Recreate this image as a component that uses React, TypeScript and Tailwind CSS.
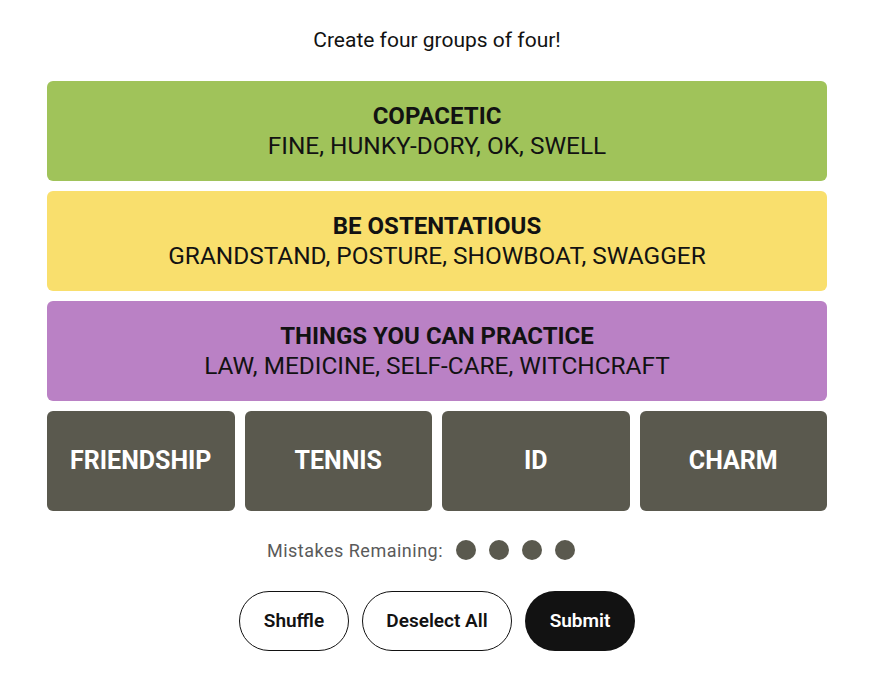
import React from "react";

const groups = [
  { title: "COPACETIC", words: "FINE, HUNKY-DORY, OK, SWELL", bg: "bg-[#a0c35a]" },
  { title: "BE OSTENTATIOUS", words: "GRANDSTAND, POSTURE, SHOWBOAT, SWAGGER", bg: "bg-[#f9df6d]" },
  { title: "THINGS YOU CAN PRACTICE", words: "LAW, MEDICINE, SELF-CARE, WITCHCRAFT", bg: "bg-[#ba81c5]" },
];

const tiles = ["FRIENDSHIP", "TENNIS", "ID", "CHARM"];

export default function App() {
  return (
    <div className="w-[874px] h-[694px] bg-white flex flex-col items-center text-[#121212]" style={{ fontFamily: "Roboto, 'Liberation Sans', sans-serif" }}>
      <div className="mt-[27px] h-[26px] text-[21px] leading-[26px]">Create four groups of four!</div>
      <div className="mt-[28px] w-[780px] flex flex-col gap-[10px]">
        {groups.map((g) => (
          <div key={g.title} className={`${g.bg} h-[100px] rounded-[6px] flex flex-col items-center justify-center`}>
            <div className="text-[24px] leading-[30px] font-bold">{g.title}</div>
            <div className="text-[24.4px] leading-[30px]">{g.words}</div>
          </div>
        ))}
        <div className="grid grid-cols-4 gap-[10px]">
          {tiles.map((t) => (
            <div key={t} className="h-[100px] rounded-[6px] bg-[#5a594e] flex items-center justify-center text-white text-[25px] font-bold">
              {t}
            </div>
          ))}
        </div>
      </div>
      <div className="mt-[29px] mr-[32px] h-[20px] flex items-center gap-[13px]">
        <span className="text-[18px] tracking-[0.5px] text-[#5a5a5a]">Mistakes Remaining:</span>
        {[0, 1, 2, 3].map((i) => (
          <span key={i} className="w-[20px] h-[20px] rounded-full bg-[#5a594e]" />
        ))}
      </div>
      <div className="mt-[31px] flex gap-[13px]">
        <button className="w-[110px] h-[60px] rounded-full border border-[#121212] bg-white text-[19px] font-semibold">Shuffle</button>
        <button className="w-[150px] h-[60px] rounded-full border border-[#121212] bg-white text-[19px] font-semibold">Deselect All</button>
        <button className="w-[110px] h-[60px] rounded-full bg-[#121212] text-white text-[19px] font-semibold">Submit</button>
      </div>
    </div>
  );
}
